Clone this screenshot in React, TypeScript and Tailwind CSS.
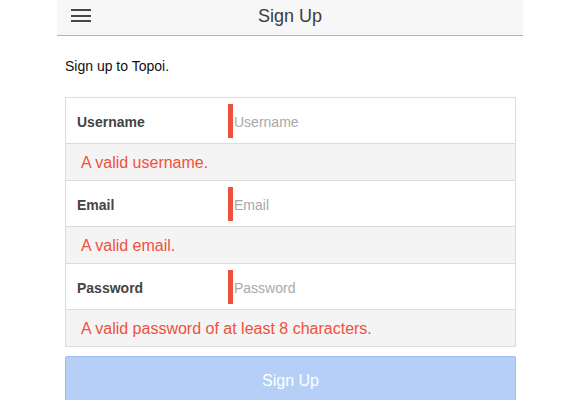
import React from "react";

const fields = [
  { label: "Username", placeholder: "Username", error: "A valid username." },
  { label: "Email", placeholder: "Email", error: "A valid email." },
  { label: "Password", placeholder: "Password", error: "A valid password of at least 8 characters." },
];

export default function App() {
  return (
    <div className="w-full min-h-[400px] bg-white" style={{ fontFamily: '"Liberation Sans", Arial, sans-serif' }}>
      <div className="w-[466px] mx-auto">
        <header className="relative h-[36px] bg-[#f7f7f7] border-b border-[#b3b3b3] flex items-center justify-center">
          <button className="absolute left-[14px] top-[9px] w-[20px] h-[13px] flex flex-col justify-between" aria-label="menu">
            <span className="block h-[2px] w-full bg-[#474747]" />
            <span className="block h-[2px] w-full bg-[#474747]" />
            <span className="block h-[2px] w-full bg-[#474747]" />
          </button>
          <h1 className="text-[18px] leading-[22px] text-[#3c3c3c] -mt-[3px]">Sign Up</h1>
        </header>
        <div className="ml-2 w-[451px]">
          <p className="mt-[20px] text-[14px] leading-[20px] text-[#111]">Sign up to Topoi.</p>
          <div className="mt-[21px] border border-[#dcdcdc]">
            {fields.map((f, i) => (
              <div key={f.label}>
                <div
                  className={
                    i > 0
                      ? "flex items-center h-[46px] bg-white border-t border-[#dcdcdc]"
                      : "flex items-center h-[45px] bg-white"
                  }
                >
                  <div className="w-[162px] pl-[11px] pt-[3px] text-[14px] font-bold text-[#444]">{f.label}</div>
                  <input
                    readOnly
                    placeholder={f.placeholder}
                    className="flex-1 h-[34px] mt-[1px] border-l-[5px] border-[#f0513c] pl-px pt-[2px] text-[14px] outline-none bg-transparent placeholder:text-[#a9a9a9]"
                  />
                </div>
                <div className="h-[37px] border-t border-[#dcdcdc] bg-[#f4f4f4] flex items-center pl-[15px] pt-[2px] text-[16px] text-[#f0503c]">
                  {f.error}
                </div>
              </div>
            ))}
          </div>
          <button className="mt-[9px] w-full h-[48px] rounded-[2px] bg-[#b5cff7] border border-[#9dbcf0] pt-[2px] text-white text-[16px]">
            Sign Up
          </button>
        </div>
      </div>
    </div>
  );
}
